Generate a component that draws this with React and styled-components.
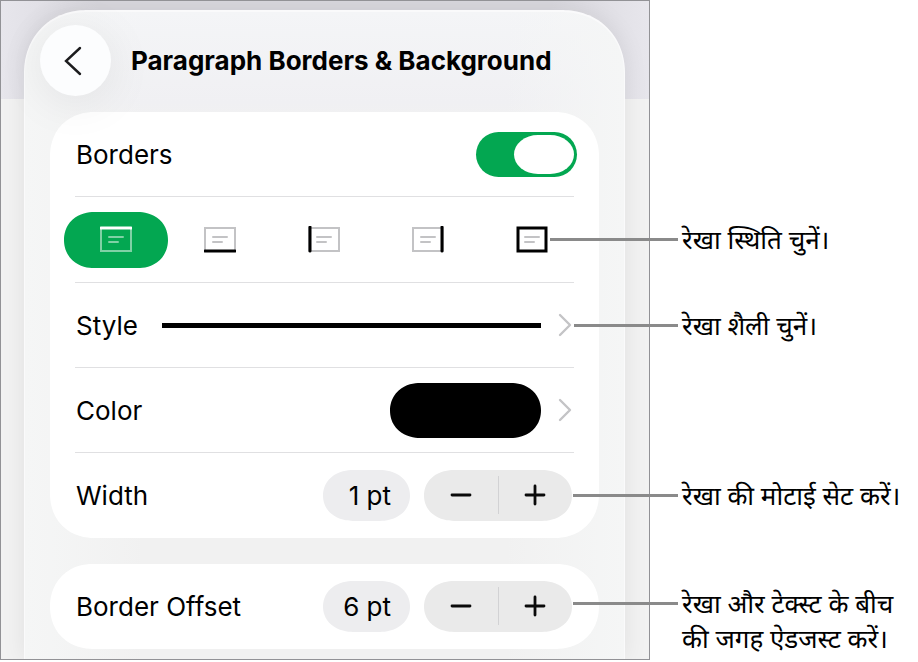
import { useState } from "react";
import styled, { createGlobalStyle, css } from "styled-components";

const POSITIONS = ["top", "bottom", "left", "right", "all"];

const NOTES = [
  { id: "position", lines: ["रेखा स्थिति चुनें।"], leader: 128 },
  { id: "style", lines: ["रेखा शैली चुनें।"], leader: 104 },
  { id: "width", lines: ["रेखा की मोटाई सेट करें।"], leader: 105 },
  { id: "offset", lines: ["रेखा और टेक्स्ट के बीच", "की जगह ऐडजस्ट करें।"], leader: 105 },
];

const BorderIcon = ({ side }) => {
  const strong = {
    top: "M1 2H31",
    bottom: "M1 25H31",
    left: "M2 1V25",
    right: "M30 1V25",
    all: "M2 2H30V25H2Z",
  };

  return (
    <svg width="32" height="27" viewBox="0 0 32 27" fill="none" aria-hidden="true">
      <g className="soft" strokeLinecap="round">
        {side !== "all" && <rect x="1" y="2" width="30" height="23" strokeWidth="2" />}
        <path d="M9 11H23M9 16H18" strokeWidth="2" />
      </g>
      <path className="strong" d={strong[side]} strokeWidth="3" strokeLinecap="round" />
    </svg>
  );
};

const Chevron = () => (
  <svg width="14" height="24" viewBox="0 0 14 24" fill="none" aria-hidden="true">
    <path d="M2 2L12 12L2 22" stroke="#c4c4c6" strokeWidth="2.4" strokeLinecap="round" strokeLinejoin="round" />
  </svg>
);

const AmountRow = ({ label, value, onChange }) => (
  <Row>
    <Label>{label}</Label>
    <Amount aria-label={label}>{value} pt</Amount>
    <Stepper>
      <StepButton aria-label={`Decrease ${label}`} onClick={() => onChange(Math.max(0, value - 1))}>
        <svg width="22" height="22" viewBox="0 0 22 22" aria-hidden="true">
          <path d="M2 11H20" />
        </svg>
      </StepButton>
      <StepDivider />
      <StepButton aria-label={`Increase ${label}`} onClick={() => onChange(value + 1)}>
        <svg width="22" height="22" viewBox="0 0 22 22" aria-hidden="true">
          <path d="M2 11H20M11 2V20" />
        </svg>
      </StepButton>
    </Stepper>
  </Row>
);

const App = () => {
  const [borders, setBorders] = useState(true);
  const [position, setPosition] = useState("top");
  const [width, setWidth] = useState(1);
  const [offset, setOffset] = useState(6);

  return (
    <>
      <GlobalStyle />
      <Figure>
        <Screen>
          <Sheet>
            <Header>
              <BackButton aria-label="Back">
                <svg width="20" height="32" viewBox="0 0 20 32" fill="none" aria-hidden="true">
                  <path d="M17 3L3 16L17 29" stroke="#1c1c1e" strokeWidth="2.4" strokeLinecap="round" />
                </svg>
              </BackButton>
              <Title>Paragraph Borders &amp; Background</Title>
            </Header>

            <Card>
              <Row>
                <Label as="label" htmlFor="borders">Borders</Label>
                <Toggle
                  type="checkbox"
                  id="borders"
                  checked={borders}
                  onChange={(e) => setBorders(e.target.checked)}
                />
              </Row>
              <Divider />
              <Positions>
                {POSITIONS.map((side) => (
                  <PositionButton
                    key={side}
                    aria-label={side}
                    aria-pressed={position === side}
                    $active={position === side}
                    onClick={() => setPosition(side)}
                  >
                    <BorderIcon side={side} />
                  </PositionButton>
                ))}
              </Positions>
              <Divider />
              <Row as="button">
                <Label>Style</Label>
                <Line />
                <Chevron />
              </Row>
              <Divider />
              <Row as="button">
                <Label>Color</Label>
                <Swatch />
                <Chevron />
              </Row>
              <Divider />
              <AmountRow label="Width" value={width} onChange={setWidth} />
            </Card>

            <Card>
              <AmountRow label="Border Offset" value={offset} onChange={setOffset} />
            </Card>
          </Sheet>
        </Screen>

        <Notes lang="hi">
          {NOTES.map(({ id, lines, leader }) => (
            <Note key={id} $leader={leader}>
              {lines.map((line) => (
                <span key={line}>{line}</span>
              ))}
            </Note>
          ))}
        </Notes>
      </Figure>
    </>
  );
};

const GlobalStyle = createGlobalStyle`
  * {
    box-sizing: border-box;
  }

  body {
    margin: 0;
    background: #fff;
    color: #000;
    font-family: Inter, "Liberation Sans", sans-serif;
    font-size: 26px;
  }

  button {
    margin: 0;
    padding: 0;
    border: none;
    background: none;
    color: inherit;
    font: inherit;
    cursor: pointer;
  }

  svg {
    display: block;
    flex: none;
  }
`;

const pill = css`
  border-radius: 30px / 50%;
  corner-shape: superellipse(1.08);
`;

const Figure = styled.main`
  display: flex;
  align-items: flex-start;
`;

const Screen = styled.section`
  flex: 1;
  min-width: 0;
  padding: 9px 24px 0 23px;
  border: 1px solid #929296;
  overflow: hidden;
  background:
    linear-gradient(transparent 98px, #f2f2f2 98px),
    linear-gradient(90deg, #e7e6ec, #d9d8de 15%, #d9d8de 85%, #e7e6ec);
`;

const Sheet = styled.div`
  display: flex;
  flex-direction: column;
  gap: 26px;
  padding: 0 25px 10px;
  border: solid #fafafb;
  border-width: 2px 1px 0;
  border-radius: 64px 64px 0 0;
  corner-shape: superellipse(1.1);
  background:
    linear-gradient(90deg, #f5f6f6, transparent 20%, transparent 80%, #f5f6f6),
    linear-gradient(#f4f5f7, #f0f0f3 90px, #f1f1f1 110px);
  box-shadow: 0 0 24px rgba(0, 0, 0, 0.08);
`;

const Header = styled.header`
  display: flex;
  align-items: center;
  gap: 20px;
  height: 71px;
  margin: 13px 0 -10px -10px;
`;

const BackButton = styled.button`
  position: relative;
  display: flex;
  flex: none;
  align-items: center;
  justify-content: center;
  width: 71px;
  height: 71px;
  padding-right: 6px;
  border-radius: 50%;
  background: #fcfdfe;
  box-shadow: 0 6px 48px rgba(0, 0, 0, 0.08);
`;

const Title = styled.h1`
  margin: 0;
  font-size: 26px;
  font-weight: 700;
  line-height: 32px;
  white-space: nowrap;
`;

const Card = styled.div`
  padding-bottom: 1px;
  border-radius: 44px;
  corner-shape: superellipse(1.08);
  background: #fff;
`;

const Row = styled.div`
  display: flex;
  align-items: center;
  gap: 14px;
  width: 100%;
  height: 84px;
  padding: 0 27px 0 26px;
`;

const Label = styled.span`
  flex: none;
  margin-right: auto;
  padding-top: 2px;
  line-height: 32px;
`;

const Divider = styled.hr`
  height: 1px;
  margin: 0 25px;
  border: none;
  background: #e0e0e2;
`;

const Toggle = styled.input`
  display: flex;
  flex: none;
  appearance: none;
  width: 101px;
  height: 45px;
  margin: 0 -5px 0 0;
  padding: 3px;
  border-radius: 24px;
  background: #c9c9cc;
  cursor: pointer;

  &::before {
    content: "";
    width: 60px;
    height: 39px;
    border-radius: 24px / 50%;
    background: #fff;
  }

  &:checked {
    justify-content: flex-end;
    background: #03a751;
  }
`;

const Positions = styled.div`
  display: flex;
  align-items: center;
  height: 85px;
  padding: 0 15px 0 14px;
`;

const PositionButton = styled.button`
  ${pill}
  display: flex;
  flex: 1;
  align-items: center;
  justify-content: center;
  height: 56px;

  .soft {
    stroke: #c3c3c5;
  }

  .strong {
    stroke: #000;
  }

  ${({ $active }) =>
    $active &&
    css`
      background: #03a751;

      .soft {
        stroke: #7fd1a5;
      }

      .strong {
        stroke: #fff;
      }
    `}
`;

const Line = styled.span`
  flex: 1;
  height: 5px;
  margin: 0 3px 0 10px;
  background: #000;
`;

const Swatch = styled.span`
  ${pill}
  width: 151px;
  height: 55px;
  margin-right: 3px;
  background: #000;
`;

const Amount = styled.output`
  ${pill}
  min-width: 87px;
  padding: 0 19px;
  background: #ededef;
  line-height: 51px;
  text-align: right;
  white-space: nowrap;
`;

const Stepper = styled.div`
  ${pill}
  display: flex;
  align-items: center;
  width: 148px;
  height: 51px;
  background: #eaeaea;
`;

const StepButton = styled.button`
  display: flex;
  flex: 1;
  align-items: center;
  justify-content: center;
  height: 100%;

  path {
    stroke: #0a0a0a;
    stroke-width: 2.8;
    stroke-linecap: round;
  }
`;

const StepDivider = styled.span`
  width: 1px;
  height: 38px;
  background: #d2d2d4;
`;

const Notes = styled.div`
  display: grid;
  flex: none;
  grid-template-rows: 86px 170px 108px auto;
  width: 268px;
  padding: 226px 0 0 32px;
  font-family: "Noto Sans Devanagari", "Noto Sans", sans-serif;
  font-size: 26px;
  line-height: 35px;
`;

const Note = styled.p`
  position: relative;
  margin: 0;
  white-space: nowrap;

  span {
    display: block;
  }

  /* leader line that runs back over the screen */
  &::before {
    content: "";
    position: absolute;
    top: 12px;
    right: 100%;
    width: ${({ $leader }) => $leader}px;
    height: 3px;
    margin-right: 4px;
    background: #8a8a8a;
  }
`;

export default App;
